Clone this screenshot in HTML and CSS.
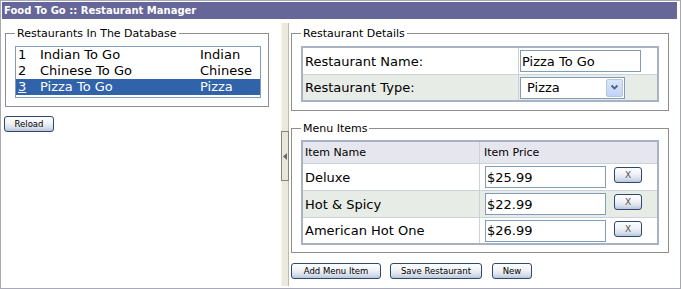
FILE: index.html
```html
<!DOCTYPE html>
<html>
<head>
<meta charset="utf-8">
<title>Food To Go :: Restaurant Manager</title>
<link rel="stylesheet" href="styles.css">
</head>
<body>
<div class="window">
  <div class="titlebar">Food To Go :: Restaurant Manager</div>
  <div class="main">
    <div class="left">
      <fieldset class="group group-list">
        <legend>Restaurants In The Database</legend>
        <div class="listbox">
          <div class="lrow"><span>1</span><span>Indian To Go</span><span>Indian</span></div>
          <div class="lrow"><span>2</span><span>Chinese To Go</span><span>Chinese</span></div>
          <div class="lrow selected"><span class="focus">3</span><span>Pizza To Go</span><span>Pizza</span></div>
        </div>
      </fieldset>
      <button class="btn btn-reload">Reload</button>
    </div>
    <div class="splitter">
      <div class="split-tab">
        <svg width="4" height="7" viewBox="0 0 4 7"><path d="M4 0 L0 3.5 L4 7 Z" fill="#6a6a60"/></svg>
      </div>
    </div>
    <div class="right">
      <fieldset class="group group-details">
        <legend>Restaurant Details</legend>
        <div class="grid details">
          <div class="cell label">Restaurant Name:</div>
          <div class="cell field"><input class="text name-input" type="text" value="Pizza To Go"></div>
          <div class="cell label alt">Restaurant Type:</div>
          <div class="cell field alt">
            <div class="select"><span class="select-text">Pizza</span><span class="select-btn"><svg width="9" height="7" viewBox="0 0 9 7"><path d="M1.5 1.5 L4.5 4.5 L7.5 1.5" fill="none" stroke="#4d6185" stroke-width="1.8"/></svg></span></div>
          </div>
        </div>
      </fieldset>
      <fieldset class="group group-menu">
        <legend>Menu Items</legend>
        <div class="grid menu">
          <div class="cell head">Item Name</div>
          <div class="cell head head-price">Item Price</div>
          <div class="cell label">Deluxe</div>
          <div class="cell price"><input class="text price-input" type="text" value="$25.99"><button class="btn btn-x">X</button></div>
          <div class="cell label alt">Hot &amp; Spicy</div>
          <div class="cell price alt"><input class="text price-input" type="text" value="$22.99"><button class="btn btn-x">X</button></div>
          <div class="cell label">American Hot One</div>
          <div class="cell price"><input class="text price-input" type="text" value="$26.99"><button class="btn btn-x">X</button></div>
        </div>
      </fieldset>
      <div class="actions">
        <button class="btn btn-add">Add Menu Item</button>
        <button class="btn btn-save">Save Restaurant</button>
        <button class="btn btn-new">New</button>
      </div>
    </div>
  </div>
</div>
</body>
</html>
```
FILE: styles.css
```css
* { box-sizing: border-box; }

body {
  margin: 0;
  background: #ffffff;
  color: #000000;
  font-family: "DejaVu Sans", Verdana, sans-serif;
  font-size: 13px;
}

.window {
  width: 681px;
  height: 289px;
  border: 1px solid #a8a8b8;
  padding: 1px 3px 1px 1px;
}

.titlebar {
  height: 17px;
  line-height: 17px;
  padding-left: 2px;
  background: #666699;
  color: #ffffff;
  font-family: "DejaVu Sans", Verdana, sans-serif;
  font-weight: bold;
  font-size: 10px;
  white-space: nowrap;
}

.main {
  display: flex;
  height: 268px;
}

.left {
  width: 279px;
  flex: none;
}

.group {
  margin: 8px 0 0 0;
  border: 1px solid #8e8e8e;
  padding: 6px 9px 8px 9px;
  min-width: 0;
}

.group legend {
  padding: 0 2px;
  font-family: "DejaVu Sans", Verdana, sans-serif;
  font-size: 11px;
  line-height: 13px;
  color: #000;
}

.group-list {
  margin-left: 3px;
  width: 264px;
}

.listbox {
  width: 246px;
  height: 52px;
  border: 1px solid #7f9db9;
  background: #fff;
}

.lrow {
  display: grid;
  grid-template-columns: 22px 160px 1fr;
  height: 16px;
  line-height: 16px;
  padding-left: 2px;
  white-space: nowrap;
}

.lrow.selected {
  background: #3163ab;
  color: #ffffff;
}

.lrow .focus {
  text-decoration: underline;
}

.btn {
  display: inline-flex;
  align-items: center;
  justify-content: center;
  height: 16px;
  padding: 0;
  border: 1px solid #30486c;
  border-radius: 3px;
  background: linear-gradient(#fefefe 0%, #f0f2f6 45%, #d9e0ec 75%, #b9c6db 100%);
  color: #000;
  font-family: "DejaVu Sans", Verdana, sans-serif;
  font-size: 8.5px;
  line-height: 14px;
  white-space: nowrap;
}

.btn-reload {
  width: 50px;
  margin: 9px 0 0 2px;
}

.splitter {
  flex: none;
  width: 8px;
  margin: 4px 0 1px 0;
  background: #ebe9de;
  border-left: 1px solid #f4f3ec;
  border-right: 1px solid #bdbaa8;
}

.split-tab {
  margin: 108px 0 0 -1px;
  width: 8px;
  height: 50px;
  border: 1px solid #85857a;
  background: #e9e7dc;
  display: flex;
  align-items: center;
  justify-content: center;
}

.right {
  flex: none;
  width: 388px;
}

.group-details,
.group-menu {
  margin-left: 2px;
  width: 378px;
}

.group-menu {
  margin-top: 11px;
  padding-top: 5px;
  padding-bottom: 7px;
}

.grid {
  display: grid;
  width: 358px;
  border: 2px solid #a9b2c2;
  background: #cdd2d9;
  gap: 1px;
}

.details {
  grid-template-columns: 215px 138px;
  grid-template-rows: 26px 25px;
}

.menu {
  grid-template-columns: 176px 177px;
  grid-template-rows: 21px 26px 26px 25px;
}

.cell {
  display: flex;
  align-items: center;
  background: #ffffff;
  white-space: nowrap;
}

.cell.alt {
  background: #e7ece7;
}

.cell.label {
  padding-left: 2px;
}

.cell.field {
  padding-left: 1px;
}

.cell.head {
  background: #e6e6ee;
  padding-left: 2px;
  font-size: 11px;
}

.cell.head-price {
  padding-left: 4px;
}

.text {
  height: 22px;
  border: 1px solid #7f9db9;
  padding: 0 1px;
  margin: 0;
  font-family: "DejaVu Sans", Verdana, sans-serif;
  font-size: 13px;
  color: #000;
  background: #fff;
  outline: none;
}

.name-input {
  width: 121px;
}

.select {
  display: flex;
  align-items: center;
  width: 105px;
  height: 22px;
  border: 1px solid #7f9db9;
  background: #fff;
  padding: 0 1px 0 6px;
}

.select-text {
  flex: 1;
}

.select-btn {
  display: flex;
  align-items: center;
  justify-content: center;
  width: 17px;
  height: 18px;
  border: 1px solid #b4c4e4;
  border-radius: 2px;
  background: linear-gradient(#dbe6fb, #c1d3f6);
}

.cell.price {
  padding-left: 5px;
}

.price-input {
  width: 121px;
}

.btn-x {
  width: 28px;
  margin-left: 8px;
  align-self: flex-start;
  margin-top: 3px;
  color: #555;
  font-size: 9px;
}

.actions {
  display: flex;
  margin: 10px 0 0 2px;
}

.btn-add {
  width: 90px;
}

.btn-save {
  width: 92px;
  margin-left: 9px;
}

.btn-new {
  width: 40px;
  margin-left: 10px;
}
```
